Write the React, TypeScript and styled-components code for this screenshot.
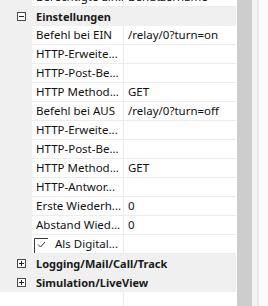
import React from "react";
import styled, { createGlobalStyle } from "styled-components";

const GlobalStyle = createGlobalStyle`
  html, body {
    margin: 0;
    padding: 0;
    background: #ffffff;
  }
  body {
    font-family: "Noto Sans", "Open Sans", sans-serif;
    font-size: 11.5px;
    color: #000000;
  }
`;

const Frame = styled.div`
  display: flex;
  width: 268px;
  height: 306px;
  overflow: hidden;
  background: #ffffff;
`;

const Grid = styled.div`
  display: flex;
  flex-direction: column;
  width: 236px;
  height: 306px;
  overflow: hidden;
  background: #ffffff;
`;

const Rows = styled.div`
  display: flex;
  flex-direction: column;
  margin-top: -12px;
`;

const Row = styled.div`
  display: flex;
  height: 19px;
  flex-shrink: 0;
`;

const Gutter = styled.div`
  width: 32px;
  flex-shrink: 0;
  background: #f0f0f0;
`;

const Cell = styled.div<{ $label?: boolean }>`
  box-sizing: border-box;
  display: flex;
  align-items: center;
  height: 19px;
  line-height: 18px;
  padding-left: 4px;
  border-bottom: 1px solid #ececec;
  ${(p) => (p.$label ? "width: 92px; border-right: 1px solid #ececec;" : "flex: 1;")}
  white-space: nowrap;
  overflow: hidden;
  color: #111111;
`;

const CheckCell = styled(Cell)`
  padding-left: 2px;
  gap: 7px;
  align-items: flex-start;
`;

const CheckText = styled.span`
  line-height: 18px;
`;

const GroupRow = styled.div`
  display: flex;
  align-items: center;
  height: 19px;
  flex-shrink: 0;
  background: #f0f0f0;
  font-size: 11px;
  font-weight: 700;
  color: #1a1a1a;
  white-space: nowrap;
`;

const Toggle = styled.svg`
  margin-left: 17px;
  margin-right: 10px;
  flex-shrink: 0;
`;

const Filler = styled.div`
  flex: 1;
  margin-left: 123px;
  border-left: 1px solid #ececec;
`;

const Spacer = styled.div`
  width: 1px;
  background: #ffffff;
`;

const ScrollTrack = styled.div`
  width: 15px;
  background: #cdcdcd;
`;

const Edge = styled.div`
  width: 5px;
  background: #f4f4f4;
`;

const EdgeLine = styled.div`
  width: 2px;
  background: #e9e9e9;
`;

const Outside = styled.div`
  flex: 1;
  background: #fbfbfb;
`;

type Item =
  | { kind: "prop"; label: string; value?: string }
  | { kind: "group"; label: string; open: boolean }
  | { kind: "check"; label: string };

const items: Item[] = [
  { kind: "prop", label: "Berechtigte Ein...", value: "Benutzername" },
  { kind: "group", label: "Einstellungen", open: true },
  { kind: "prop", label: "Befehl bei EIN", value: "/relay/0?turn=on" },
  { kind: "prop", label: "HTTP-Erweite..." },
  { kind: "prop", label: "HTTP-Post-Be..." },
  { kind: "prop", label: "HTTP Method...", value: "GET" },
  { kind: "prop", label: "Befehl bei AUS", value: "/relay/0?turn=off" },
  { kind: "prop", label: "HTTP-Erweite..." },
  { kind: "prop", label: "HTTP-Post-Be..." },
  { kind: "prop", label: "HTTP Method...", value: "GET" },
  { kind: "prop", label: "HTTP-Antwor..." },
  { kind: "prop", label: "Erste Wiederh...", value: "0" },
  { kind: "prop", label: "Abstand Wied...", value: "0" },
  { kind: "check", label: "Als Digital..." },
  { kind: "group", label: "Logging/Mail/Call/Track", open: false },
  { kind: "group", label: "Simulation/LiveView", open: false },
];

const ExpandBox = ({ open }: { open: boolean }) => (
  <Toggle width="9" height="9" viewBox="0 0 9 9">
    <rect x="0.5" y="0.5" width="8" height="8" fill="#ffffff" stroke="#4a4a4a" />
    <path d="M2 4.5H7" stroke="#222" />
    {!open && <path d="M4.5 2V7" stroke="#222" />}
  </Toggle>
);

const CheckMark = () => (
  <svg width="14" height="18" viewBox="0 0 14 18" style={{ flexShrink: 0 }}>
    <path d="M0.5 18V3.5H14" fill="none" stroke="#3a3a3a" />
    <path d="M4 9.5L6.5 12L11 7" fill="none" stroke="#3a3a3a" strokeWidth="1" />
  </svg>
);

const App: React.FC = () => {
  return (
    <>
      <GlobalStyle />
      <Frame>
        <Grid>
          <Rows>
            {items.map((it, i) => {
              if (it.kind === "group") {
                return (
                  <GroupRow key={i}>
                    <ExpandBox open={it.open} />
                    {it.label}
                  </GroupRow>
                );
              }
              if (it.kind === "check") {
                return (
                  <Row key={i}>
                    <Gutter />
                    <CheckCell $label>
                      <CheckMark />
                      <CheckText>{it.label}</CheckText>
                    </CheckCell>
                    <Cell />
                  </Row>
                );
              }
              return (
                <Row key={i}>
                  <Gutter />
                  <Cell $label>{it.label}</Cell>
                  <Cell>{it.value}</Cell>
                </Row>
              );
            })}
          </Rows>
          <Filler />
        </Grid>
        <Spacer />
        <ScrollTrack />
        <Edge />
        <EdgeLine />
        <Outside />
      </Frame>
    </>
  );
};

export default App;
